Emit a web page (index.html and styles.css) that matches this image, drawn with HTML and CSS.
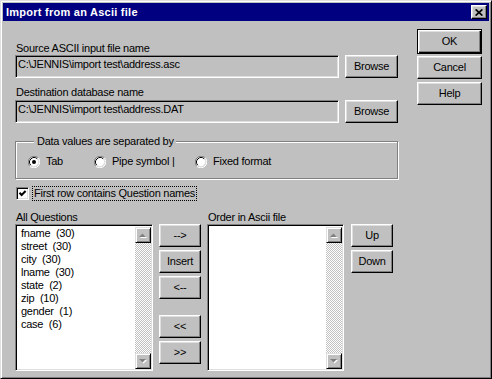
FILE: index.html
```html
<!DOCTYPE html>
<html>
<head>
<meta charset="utf-8">
<title>Import from an Ascii file</title>
<link rel="stylesheet" href="styles.css">
</head>
<body>
<div class="window">
  <div class="titlebar">
    <span class="title">Import from an Ascii file</span>
    <span class="close"><svg width="8" height="7" viewBox="0 0 8 7"><path d="M0.6 0.4L7.4 6.6M7.4 0.4L0.6 6.6" stroke="#000" stroke-width="1.7" fill="none"/></svg></span>
  </div>
  <div class="body">
    <div class="top">
      <div class="form">
        <div class="label">Source ASCII input file name</div>
        <div class="row">
          <div class="field">C:\JENNIS\import test\address.asc</div>
          <div class="btn browse">Browse</div>
        </div>
        <div class="label label2">Destination database name</div>
        <div class="row">
          <div class="field">C:\JENNIS\import test\address.DAT</div>
          <div class="btn browse">Browse</div>
        </div>
        <div class="group">
          <span class="legend">Data values are separated by</span>
          <div class="radios">
            <div class="radio">
              <svg width="12" height="12" viewBox="0 0 12 12"><circle cx="6" cy="6" r="5" fill="#fff"/><path d="M1.76 10.24A6 6 0 0 1 10.24 1.76" stroke="#808080" stroke-width="1" fill="none" transform="translate(0 0)"/><path d="M10.24 1.76A6 6 0 0 1 1.76 10.24" stroke="#fff" stroke-width="1" fill="none"/><path d="M2.82 9.18A4.5 4.5 0 0 1 9.18 2.82" stroke="#000" stroke-width="1" fill="none"/><path d="M9.18 2.82A4.5 4.5 0 0 1 2.82 9.18" stroke="#dfdfdf" stroke-width="1" fill="none"/><circle cx="6" cy="6" r="2" fill="#000"/></svg>
              <span>Tab</span>
            </div>
            <div class="radio">
              <svg width="12" height="12" viewBox="0 0 12 12"><circle cx="6" cy="6" r="5" fill="#fff"/><path d="M1.76 10.24A6 6 0 0 1 10.24 1.76" stroke="#808080" stroke-width="1" fill="none"/><path d="M10.24 1.76A6 6 0 0 1 1.76 10.24" stroke="#fff" stroke-width="1" fill="none"/><path d="M2.82 9.18A4.5 4.5 0 0 1 9.18 2.82" stroke="#000" stroke-width="1" fill="none"/><path d="M9.18 2.82A4.5 4.5 0 0 1 2.82 9.18" stroke="#dfdfdf" stroke-width="1" fill="none"/></svg>
              <span>Pipe symbol |</span>
            </div>
            <div class="radio">
              <svg width="12" height="12" viewBox="0 0 12 12"><circle cx="6" cy="6" r="5" fill="#fff"/><path d="M1.76 10.24A6 6 0 0 1 10.24 1.76" stroke="#808080" stroke-width="1" fill="none"/><path d="M10.24 1.76A6 6 0 0 1 1.76 10.24" stroke="#fff" stroke-width="1" fill="none"/><path d="M2.82 9.18A4.5 4.5 0 0 1 9.18 2.82" stroke="#000" stroke-width="1" fill="none"/><path d="M9.18 2.82A4.5 4.5 0 0 1 2.82 9.18" stroke="#dfdfdf" stroke-width="1" fill="none"/></svg>
              <span>Fixed format</span>
            </div>
          </div>
        </div>
        <div class="check">
          <span class="checkbox"><svg width="9" height="9" viewBox="0 0 9 9"><path d="M1.5 3.8L3.6 6L7.6 2" stroke="#000" stroke-width="2" fill="none"/></svg></span>
          <span class="focus">First row contains Question names</span>
        </div>
      </div>
      <div class="side">
        <div class="btn default">OK</div>
        <div class="btn cancel">Cancel</div>
        <div class="btn">Help</div>
      </div>
    </div>
    <div class="lists">
      <div class="col col1">
        <div class="label">All Questions</div>
        <div class="listbox">
          <div class="items">
            <div class="item">fname  (30)</div>
            <div class="item">street  (30)</div>
            <div class="item">city  (30)</div>
            <div class="item">lname  (30)</div>
            <div class="item">state  (2)</div>
            <div class="item">zip  (10)</div>
            <div class="item">gender  (1)</div>
            <div class="item">case  (6)</div>
          </div>
          <div class="scrollbar">
            <div class="sbtn"><svg width="8" height="5" viewBox="0 0 8 5"><polygon points="1,5 4.5,1.5 8,5" fill="#fff"/><polygon points="0,4 3.5,0.5 7,4" fill="#808080"/></svg></div>
            <div class="track"></div>
            <div class="sbtn"><svg width="8" height="5" viewBox="0 0 8 5"><polygon points="1,1 8,1 4.5,4.5" fill="#fff"/><polygon points="0,0 7,0 3.5,3.5" fill="#808080"/></svg></div>
          </div>
        </div>
      </div>
      <div class="mid">
        <div class="btn">--&gt;</div>
        <div class="btn">Insert</div>
        <div class="btn">&lt;--</div>
        <div class="btn spaced">&lt;&lt;</div>
        <div class="btn">&gt;&gt;</div>
      </div>
      <div class="col col2">
        <div class="label">Order in Ascii file</div>
        <div class="listbox">
          <div class="items"></div>
          <div class="scrollbar">
            <div class="sbtn"><svg width="8" height="5" viewBox="0 0 8 5"><polygon points="1,5 4.5,1.5 8,5" fill="#fff"/><polygon points="0,4 3.5,0.5 7,4" fill="#808080"/></svg></div>
            <div class="track"></div>
            <div class="sbtn"><svg width="8" height="5" viewBox="0 0 8 5"><polygon points="1,1 8,1 4.5,4.5" fill="#fff"/><polygon points="0,0 7,0 3.5,3.5" fill="#808080"/></svg></div>
          </div>
        </div>
      </div>
      <div class="updown">
        <div class="btn">Up</div>
        <div class="btn">Down</div>
      </div>
    </div>
  </div>
</div>
</body>
</html>
```

FILE: styles.css
```css
* { box-sizing: border-box; }
html, body { margin: 0; padding: 0; background: #c0c0c0; }
body {
  font-family: "Liberation Sans", Arial, sans-serif;
  font-size: 11px;
  line-height: 13px;
  letter-spacing: -0.25px;
  color: #000;
}
.window {
  width: 492px;
  height: 379px;
  border: 1px solid;
  border-color: #dfdfdf #000 #000 #dfdfdf;
  box-shadow: inset 1px 1px #fff, inset -1px -1px #808080;
  padding: 2px;
  background: #c0c0c0;
  display: flex;
  flex-direction: column;
}
.titlebar {
  height: 18px;
  flex: none;
  background: #000080;
  display: flex;
  align-items: center;
  justify-content: space-between;
  padding: 0 2px 0 3px;
}
.title {
  color: #fff;
  font-weight: bold;
  letter-spacing: 0.25px;
  line-height: 18px;
}
.close {
  width: 16px;
  height: 14px;
  background: #c0c0c0;
  border: 1px solid;
  border-color: #fff #000 #000 #fff;
  box-shadow: inset -1px -1px #808080, inset 1px 1px #dfdfdf;
  display: flex;
  align-items: center;
  justify-content: center;
  padding: 0 1px 0 0;
}
.close svg { display: block; }
.body {
  flex: 1;
  padding-left: 12px;
}
.top {
  display: flex;
  align-items: flex-start;
}
.form {
  width: 383px;
  padding-top: 21px;
}
.label { padding-left: 1px; white-space: nowrap; }
.label2 { margin-top: 8px; margin-bottom: 1px; }
.row {
  display: flex;
  gap: 6px;
}
.field {
  width: 324px;
  height: 23px;
  border: 1px solid;
  border-color: #808080 #fff #fff #808080;
  box-shadow: inset 1px 1px #000, inset -1px -1px #dfdfdf;
  background: #c0c0c0;
  padding: 2px 3px 4px 2px;
  white-space: nowrap;
}
.btn {
  height: 23px;
  background: #c0c0c0;
  border: 1px solid;
  border-color: #fff #000 #000 #fff;
  box-shadow: inset -1px -1px #808080, inset 1px 1px #dfdfdf;
  display: flex;
  align-items: center;
  justify-content: center;
  white-space: nowrap;
  padding-bottom: 1px;
}
.browse { width: 53px; }
.group {
  margin-top: 18px;
  width: 383px;
  border: 1px solid #808080;
  box-shadow: inset 1px 1px #fff, 1px 1px 0 #fff;
  padding: 0 0 10px 12px;
}
.legend {
  display: block;
  width: fit-content;
  margin: -7px 0 0 6px;
  padding: 0 2px 0 3px;
  background: #c0c0c0;
  white-space: nowrap;
}
.radios {
  margin-top: 7px;
  display: grid;
  grid-template-columns: 66px 101px auto;
  height: 13px;
}
.radio {
  display: flex;
  align-items: center;
  white-space: nowrap;
}
.radio svg { display: block; margin-right: 6px; flex: none; }
.check {
  margin-top: 7px;
  padding-left: 1px;
  display: flex;
  align-items: center;
  height: 15px;
}
.checkbox {
  width: 13px;
  height: 13px;
  background: #fff;
  border: 1px solid;
  border-color: #808080 #fff #fff #808080;
  box-shadow: inset 1px 1px #000, inset -1px -1px #dfdfdf;
  padding: 1px;
  display: flex;
  align-items: center;
  justify-content: center;
  margin-right: 3px;
}
.checkbox svg { display: block; }
.focus {
  border: 1px dotted #000;
  padding: 0 1px;
  white-space: nowrap;
}
.side {
  margin-left: 19px;
  padding-top: 8px;
  width: 65px;
  display: flex;
  flex-direction: column;
}
.side .btn { width: 65px; }
.btn.default {
  height: 25px;
  border-color: #000;
  box-shadow: inset 1px 1px #fff, inset -1px -1px #000, inset -2px -2px #808080, inset 2px 2px #dfdfdf;
  margin-bottom: 2px;
}
.btn.cancel { margin-bottom: 3px; }
.lists {
  margin-top: 10px;
  display: flex;
  align-items: flex-start;
}
.col1 { width: 138px; }
.col2 { width: 137px; margin-left: 6px; }
.listbox {
  height: 147px;
  background: #fff;
  border: 1px solid;
  border-color: #808080 #fff #fff #808080;
  box-shadow: inset 1px 1px #000, inset -1px -1px #dfdfdf;
  padding: 2px 1px 1px 2px;
  display: flex;
}
.items {
  flex: 1;
  padding-left: 3px;
}
.item { white-space: pre; }
.scrollbar {
  width: 16px;
  flex: none;
  display: flex;
  flex-direction: column;
}
.sbtn {
  width: 16px;
  height: 16px;
  flex: none;
  background: #c0c0c0;
  border: 1px solid;
  border-color: #dfdfdf #000 #000 #dfdfdf;
  box-shadow: inset 1px 1px #fff, inset -1px -1px #808080;
  display: flex;
  align-items: center;
  justify-content: center;
}
.sbtn svg { display: block; }
.track {
  flex: 1;
  background: repeating-conic-gradient(#c0c0c0 0 25%, #fff 0 50%) 0 0 / 2px 2px;
}
.mid {
  width: 42px;
  margin-left: 6px;
  margin-top: 13px;
  display: flex;
  flex-direction: column;
  gap: 3px;
}
.mid .spaced { margin-top: 13px; }
.updown {
  width: 42px;
  margin-left: 7px;
  margin-top: 13px;
  display: flex;
  flex-direction: column;
  gap: 3px;
}
```
